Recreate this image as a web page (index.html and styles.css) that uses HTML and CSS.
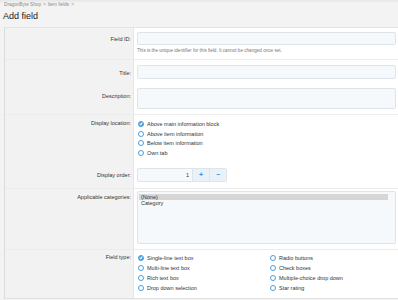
FILE: index.html
```html
<!DOCTYPE html>
<html>
<head>
<meta charset="utf-8">
<link rel="stylesheet" href="styles.css">
</head>
<body>
<div class="crumbs"><span>DragonByte Shop</span><span class="sep">&gt;</span><span>Item fields</span><span class="sep">&gt;</span></div>
<h1 class="title">Add field</h1>
<div class="form">
  <div class="group">
    <div class="row r-id">
      <div class="label">Field ID:</div>
      <div class="ctrl">
        <div class="input"></div>
        <div class="hint">This is the unique identifier for this field. It cannot be changed once set.</div>
      </div>
    </div>
  </div>
  <div class="group">
    <div class="row r-title">
      <div class="label">Title:</div>
      <div class="ctrl"><div class="input tall"></div></div>
    </div>
    <div class="row r-desc">
      <div class="label">Description:</div>
      <div class="ctrl"><div class="input area"></div></div>
    </div>
  </div>
  <div class="group">
    <div class="row r-loc">
      <div class="label">Display location:</div>
      <div class="ctrl radios">
        <div class="radio on"><span class="dot"></span>Above main information block</div>
        <div class="radio"><span class="dot"></span>Above item information</div>
        <div class="radio"><span class="dot"></span>Below item information</div>
        <div class="radio"><span class="dot"></span>Own tab</div>
      </div>
    </div>
    <div class="row r-order">
      <div class="label">Display order:</div>
      <div class="ctrl">
        <div class="spinner"><div class="num">1</div><div class="btn">+</div><div class="btn">&minus;</div></div>
      </div>
    </div>
  </div>
  <div class="group">
    <div class="row r-cat">
      <div class="label">Applicable categories:</div>
      <div class="ctrl">
        <div class="listbox">
          <div class="opt sel">(None)</div>
          <div class="opt">Category</div>
        </div>
      </div>
    </div>
  </div>
  <div class="group last">
    <div class="row r-type">
      <div class="label">Field type:</div>
      <div class="ctrl types">
        <div class="radio on"><span class="dot"></span>Single-line text box</div>
        <div class="radio"><span class="dot"></span>Radio buttons</div>
        <div class="radio"><span class="dot"></span>Multi-line text box</div>
        <div class="radio"><span class="dot"></span>Check boxes</div>
        <div class="radio"><span class="dot"></span>Rich text box</div>
        <div class="radio"><span class="dot"></span>Multiple-choice drop down</div>
        <div class="radio"><span class="dot"></span>Drop down selection</div>
        <div class="radio"><span class="dot"></span>Star rating</div>
      </div>
    </div>
  </div>
</div>
</body>
</html>
```
FILE: styles.css
```css
html, body { margin: 0; padding: 0; }
body {
  background: #f3f3f3;
  font-family: "Liberation Sans", Arial, sans-serif;
  color: #333;
  width: 398px;
  height: 300px;
  overflow: hidden;
}
.crumbs {
  height: 10px;
  padding: 0 0 0 4px;
  font-size: 4.7px;
  line-height: 10px;
  color: #8a8a8a;
  background: linear-gradient(#e6e6e6, #f3f3f3 3px);
}
.crumbs .sep { margin: 0 2px; }
.title {
  margin: 0;
  padding: 0 0 0 3px;
  height: 17px;
  font-size: 9px;
  line-height: 12px;
  font-weight: normal;
  color: #222;
}
.form {
  margin-left: 4px;
  width: 394px;
  border-left: 1px solid #dcdcdc;
  border-top: 1px solid #e4e4e4;
  border-bottom: 1px solid #e0e0e0;
  background: linear-gradient(to right, #f2f2f2 128px, #e6e6e6 128px, #e6e6e6 129px, #fff 129px);
}
.group { border-bottom: 1px solid #ececec; }
.group.last { border-bottom: none; }
.row {
  display: grid;
  grid-template-columns: 129px 1fr;
}
.label {
  text-align: right;
  padding-right: 3px;
  font-size: 5.5px;
  color: #333;
}
.ctrl { padding-left: 3px; padding-right: 3px; }
.input {
  height: 11px;
  border: 1px solid #dde4ea;
  border-radius: 2px;
  background: #f6f9fc;
}
.input.tall { height: 12px; }
.input.area { height: 19px; }
.hint {
  font-size: 4.6px;
  color: #777;
  line-height: 6px;
  margin-top: 3px;
}
.r-id { padding: 4px 0 5px; }
.r-id .label { padding-top: 4px; }
.r-title { padding-top: 5px; }
.r-title .label { padding-top: 5px; }
.r-desc { padding: 9px 0 5px; }
.r-desc .label { padding-top: 5px; }
.radios { display: flex; flex-direction: column; }
.radio {
  display: flex;
  align-items: center;
  height: 9.7px;
  font-size: 5.5px;
  color: #333;
  white-space: nowrap;
}
.dot {
  width: 4px;
  height: 4px;
  border: 0.8px solid #4a9fe0;
  border-radius: 50%;
  background: #fff;
  margin-left: 0.5px;
  margin-right: 3.5px;
  flex: none;
  position: relative;
}
.radio.on .dot { background: #4a9fe0; }
.radio.on .dot::after {
  content: "";
  position: absolute;
  left: 1.1px;
  top: 0.5px;
  width: 1px;
  height: 2px;
  border-right: 0.8px solid #fff;
  border-bottom: 0.8px solid #fff;
  transform: rotate(40deg);
}
.r-loc { padding-top: 4px; }
.r-loc .label { line-height: 9.7px; }
.r-order { padding: 10px 0 6px; }
.r-order .label { line-height: 12px; padding-top: 1px; }
.spinner {
  display: flex;
  width: 88px;
  height: 12px;
  border: 1px solid #dde4ea;
  border-radius: 2px;
  background: #f6f9fc;
  overflow: hidden;
}
.num {
  width: 54px;
  text-align: right;
  padding-right: 3px;
  box-sizing: border-box;
  font-size: 5.5px;
  line-height: 12px;
  color: #333;
}
.btn {
  width: 16px;
  text-align: center;
  line-height: 12px;
  font-size: 7px;
  font-weight: bold;
  color: #3f8fd6;
  background: #eaf2f9;
  border-left: 1px solid #dde4ea;
}
.r-cat { padding: 2px 0 5px; }
.r-cat .label { padding-top: 3px; }
.listbox {
  height: 49px;
  border: 1px solid #dde4ea;
  border-radius: 2px;
  background: #f6f9fc;
  padding: 2px 7px 0 1px;
}
.opt {
  font-size: 5.5px;
  line-height: 6.5px;
  padding-left: 2px;
  color: #333;
}
.opt.sel { background: #d6d6d6; }
.r-type { padding: 3px 0 5px; }
.r-type .label { line-height: 9.7px; }
.types {
  display: grid;
  grid-template-columns: 132px 1fr;
  grid-auto-rows: 10px;
}
.types .radio { height: 10px; }
```
